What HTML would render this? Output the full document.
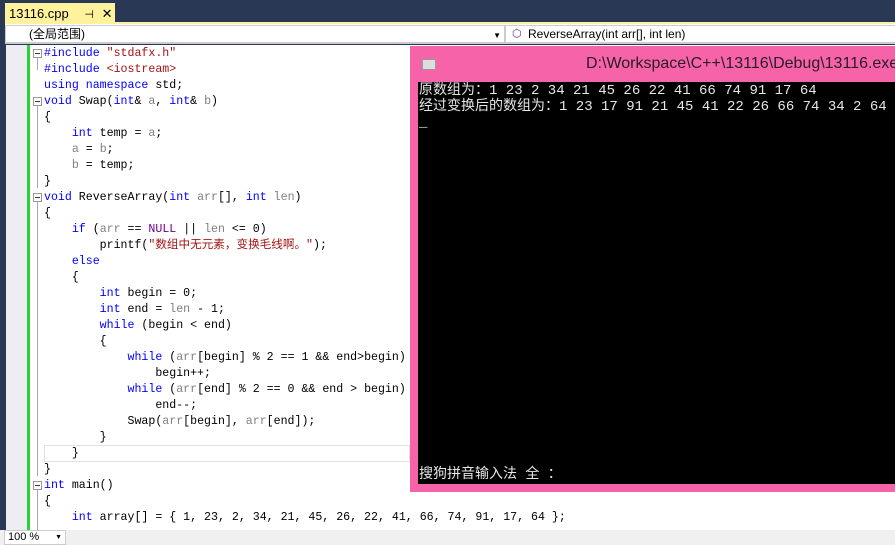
<!DOCTYPE html>
<html><head><meta charset="utf-8"><style>
*{margin:0;padding:0;box-sizing:border-box}
body{width:895px;height:545px;overflow:hidden;background:#293955;position:relative;font-family:"Liberation Sans","Noto Sans CJK SC",sans-serif}
.tab{position:absolute;left:5px;top:3px;width:110px;height:20px;background:#fff29d;font-size:13px;padding:3px 0 0 4px;color:#000;white-space:nowrap}
.yl{position:absolute;left:5px;right:0;top:22px;height:2px;background:#fff29d}
.nav{position:absolute;left:5px;right:0;top:24px;height:20px;background:#fff;border-bottom:1px solid #ccc;font-size:12px}
.dd{position:absolute;top:1px;height:18px;border:1px solid #ccc;padding:1px 0 0 22px;white-space:nowrap;line-height:15px}
.ed{position:absolute;left:6px;right:0;top:45px;height:485px;background:#fff}
.gut{position:absolute;left:6px;top:45px;width:21px;height:485px;background:#eeeef2}
.grn{position:absolute;left:27px;top:45px;width:3px;height:485px;background:#2ad23a}
pre{position:absolute;left:44px;top:46px;font-family:"Liberation Mono","Noto Sans CJK SC",monospace;font-size:11.6px;line-height:16px;color:#000}
.k{color:#0000ff}.s{color:#a31515}.p{color:#808080}.n{color:#6f008a}
.cur{position:absolute;left:44px;top:445px;width:366px;height:17px;border:1px solid #e2e2e2}
.con{position:absolute;left:410px;top:46px;width:485px;height:446px;background:#f763a8}
.cb{position:absolute;left:8px;top:36px;right:0;height:402px;background:#000;color:#e6e6e6;font-family:"Liberation Mono","Noto Sans CJK SC",monospace;font-size:14px;line-height:16px;padding:1px 0 0 1px;white-space:pre}
.ttl{position:absolute;left:176px;top:9px;font-size:16px;color:#2a1a2a;white-space:nowrap}
.status{position:absolute;left:0;right:0;top:530px;height:15px;background:#f0f0f0}
.fb{position:absolute;left:33px;width:9px;height:9px;border:1px solid #999;background:#fff}
.fb:after{content:"";position:absolute;left:1px;top:3px;width:5px;height:1px;background:#333}
.fl{position:absolute;left:37px;width:1px;background:#aaa}
</style></head><body>
<div class="tab">13116.cpp <span style="margin-left:12px;font-size:11px">⊣</span> <span style="margin-left:4px">✕</span></div>
<div class="yl"></div>
<div class="nav">
<div class="dd" style="left:0;width:500px;padding-left:23px">(全局范围)<span style="position:absolute;right:3px;top:2px;font-size:8px">▼</span></div>
<div class="dd" style="left:500px;width:395px">ReverseArray(int arr[], int len)<span style="position:absolute;left:6px;top:1px;color:#6a2c8e;font-size:11px">⬡</span></div>
</div>
<div class="ed"></div><div class="gut"></div><div class="grn"></div>
<div class="fb" style="top:49px"></div><div class="fl" style="top:58px;height:12px"></div>
<div class="fb" style="top:97px"></div><div class="fl" style="top:106px;height:82px"></div>
<div class="fb" style="top:193px"></div><div class="fl" style="top:202px;height:274px"></div>
<div class="fb" style="top:481px"></div><div class="fl" style="top:490px;height:40px"></div>
<div class="cur"></div>
<pre><span class="k">#include</span> <span class="s">"stdafx.h"</span>
<span class="k">#include</span> <span class="s">&lt;iostream&gt;</span>
<span class="k">using namespace</span> std;
<span class="k">void</span> Swap(<span class="k">int</span>&amp; <span class="p">a</span>, <span class="k">int</span>&amp; <span class="p">b</span>)
{
    <span class="k">int</span> temp = <span class="p">a</span>;
    <span class="p">a</span> = <span class="p">b</span>;
    <span class="p">b</span> = temp;
}
<span class="k">void</span> ReverseArray(<span class="k">int</span> <span class="p">arr</span>[], <span class="k">int</span> <span class="p">len</span>)
{
    <span class="k">if</span> (<span class="p">arr</span> == <span class="n">NULL</span> || <span class="p">len</span> &lt;= 0)
        printf(<span class="s">"数组中无元素，变换毛线啊。"</span>);
    <span class="k">else</span>
    {
        <span class="k">int</span> begin = 0;
        <span class="k">int</span> end = <span class="p">len</span> - 1;
        <span class="k">while</span> (begin &lt; end)
        {
            <span class="k">while</span> (<span class="p">arr</span>[begin] % 2 == 1 &amp;&amp; end&gt;begin)
                begin++;
            <span class="k">while</span> (<span class="p">arr</span>[end] % 2 == 0 &amp;&amp; end &gt; begin)
                end--;
            Swap(<span class="p">arr</span>[begin], <span class="p">arr</span>[end]);
        }
    }
}
<span class="k">int</span> main()
{
    <span class="k">int</span> array[] = { 1, 23, 2, 34, 21, 45, 26, 22, 41, 66, 74, 91, 17, 64 };</pre>
<div class="con">
<div style="position:absolute;left:12px;top:13px;width:14px;height:11px;background:#ddd;border:1px solid #999"></div>
<div class="ttl">D:\Workspace\C++\13116\Debug\13116.exe</div>
<div class="cb">原数组为：1 23 2 34 21 45 26 22 41 66 74 91 17 64
经过变换后的数组为：1 23 17 91 21 45 41 22 26 66 74 34 2 64
_





















搜狗拼音输入法 全 ：</div>
</div>
<div class="status"><div style="position:absolute;left:4px;top:0;width:62px;height:15px;background:#fff;border:1px solid #ccc;font-size:11px;padding-left:3px">100 %<span style="position:absolute;right:3px;font-size:7px;top:3px">▼</span></div></div>
</body></html>
